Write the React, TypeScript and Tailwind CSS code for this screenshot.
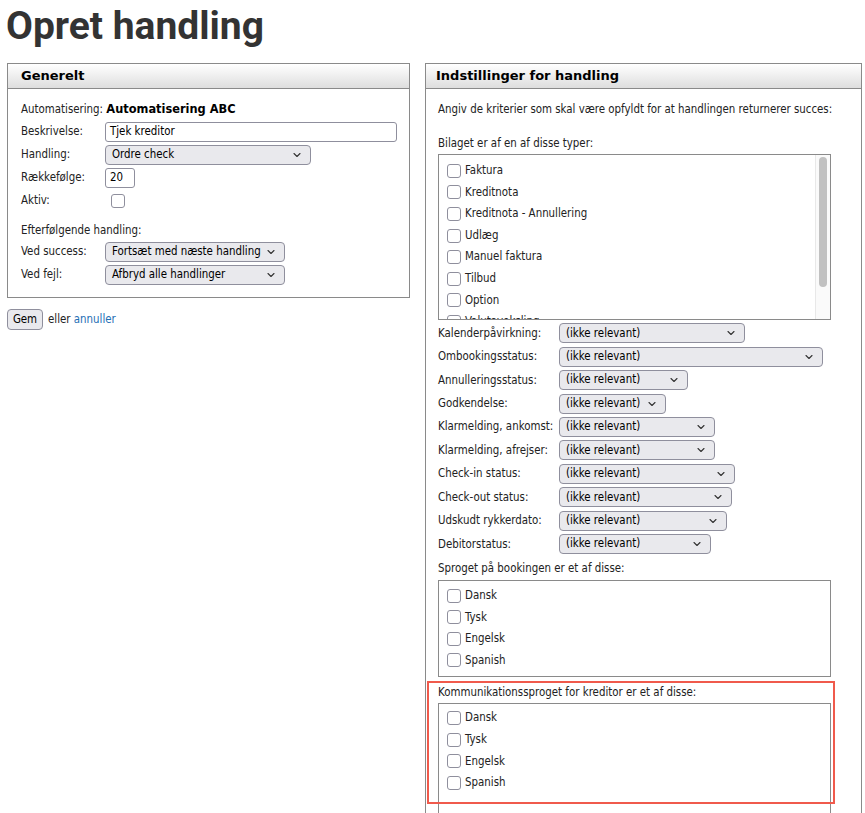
import React from "react";

function Chevron() {
  return (
    <svg width="8" height="5" viewBox="0 0 8 5" className="absolute right-[9px] top-1/2 -translate-y-1/2">
      <path d="M1 1 L4 4 L7 1" fill="none" stroke="#333" strokeWidth="1.1" strokeLinecap="round" strokeLinejoin="round" />
    </svg>
  );
}

function Sel({ w, text }: { w: string; text: string }) {
  return (
    <div className={`relative h-[20px] ${w} shrink-0 rounded-[4px] border border-[#8f8f9d] bg-[#e9e9ed] flex items-center pl-[6px] text-black whitespace-nowrap`}>
      <span className="leading-none">{text}</span>
      <Chevron />
    </div>
  );
}

function Box() {
  return <span className="block w-[14px] h-[14px] shrink-0 rounded-[3px] border-[1.5px] border-[#8f8f9d] bg-white" />;
}

function CheckItem({ label }: { label: string }) {
  return (
    <div className="flex items-center h-[21.6px] gap-[4px] whitespace-nowrap">
      <Box />
      <span className="leading-none">{label}</span>
    </div>
  );
}

const types = [
  "Faktura",
  "Kreditnota",
  "Kreditnota - Annullering",
  "Udlæg",
  "Manuel faktura",
  "Tilbud",
  "Option",
  "Valutaveksling",
];

const selects: [string, string][] = [
  ["Kalenderpåvirkning:", "w-[186px]"],
  ["Ombookingsstatus:", "w-[264px]"],
  ["Annulleringsstatus:", "w-[129px]"],
  ["Godkendelse:", "w-[107px]"],
  ["Klarmelding, ankomst:", "w-[156px]"],
  ["Klarmelding, afrejser:", "w-[156px]"],
  ["Check-in status:", "w-[176px]"],
  ["Check-out status:", "w-[173px]"],
  ["Udskudt rykkerdato:", "w-[168px]"],
  ["Debitorstatus:", "w-[152px]"],
];

const langs = ["Dansk", "Tysk", "Engelsk", "Spanish"];

function PanelHeader({ title, pad }: { title: string; pad: string }) {
  return (
    <div className={`h-[25px] bg-gradient-to-b from-white to-[#dedede] border-b border-[#8a8a8a] flex items-center ${pad} font-['DejaVu_Sans',sans-serif] font-bold text-[13px] text-black`}>
      {title}
    </div>
  );
}

export default function App() {
  return (
    <div className="relative w-[865px] h-[813px] overflow-hidden bg-white text-[11.4px] text-[#222] font-['DejaVu_Sans_Condensed','DejaVu_Sans',sans-serif]">
      <h1 className="font-['Roboto',sans-serif] font-bold text-[39px] leading-[48px] text-[#333] pl-[6px] pt-[2px] h-[63px]">
        Opret handling
      </h1>
      <div className="flex items-start pl-[7px]">
        {/* Left column */}
        <div className="w-[403px] shrink-0">
          <div className="border border-[#8a8a8a]">
            <PanelHeader title="Generelt" pad="pl-[13px]" />
            <div className="pl-[13px] pt-[11px] pb-[11px] whitespace-nowrap">
              <div className="h-[20px] flex items-center">
                <span>Automatisering:&nbsp;</span>
                <span className="font-['DejaVu_Sans',sans-serif] font-bold text-black">Automatisering ABC</span>
              </div>
              <div className="h-[23px] flex items-center">
                <span className="w-[84px] shrink-0">Beskrivelse:</span>
                <div className="h-[20px] w-[292px] rounded-[3px] border border-[#8f8f9d] bg-white flex items-center pl-[4px] text-black">
                  Tjek kreditor
                </div>
              </div>
              <div className="h-[23px] flex items-center">
                <span className="w-[84px] shrink-0">Handling:</span>
                <Sel w="w-[206px]" text="Ordre check" />
              </div>
              <div className="h-[23px] flex items-center">
                <span className="w-[84px] shrink-0">Rækkefølge:</span>
                <div className="h-[20px] w-[30px] rounded-[3px] border border-[#8f8f9d] bg-white flex items-center pl-[4px] text-black">
                  20
                </div>
              </div>
              <div className="h-[23px] flex items-center">
                <span className="w-[90px] shrink-0">Aktiv:</span>
                <Box />
              </div>
              <div className="h-[10px]" />
              <div className="h-[18px] flex items-center">Efterfølgende handling:</div>
              <div className="h-[23px] flex items-center">
                <span className="w-[84px] shrink-0">Ved success:</span>
                <Sel w="w-[180px]" text="Fortsæt med næste handling" />
              </div>
              <div className="h-[23px] flex items-center">
                <span className="w-[84px] shrink-0">Ved fejl:</span>
                <Sel w="w-[180px]" text="Afbryd alle handlinger" />
              </div>
            </div>
          </div>
          <div className="flex items-center mt-[11px] gap-[5px]">
            <div className="h-[21px] w-[36px] rounded-[4px] border border-[#8f8f9d] bg-[#e9e9ed] flex items-center justify-center text-black">
              Gem
            </div>
            <span>
              eller <span className="text-[#1f6fb5]">annuller</span>
            </span>
          </div>
        </div>

        {/* Right column */}
        <div className="w-[437px] shrink-0 ml-[15px] border border-[#8a8a8a] h-[760px]">
          <PanelHeader title="Indstillinger for handling" pad="pl-[10px]" />
          <div className="pl-[12px] pt-[11px] whitespace-nowrap">
            <div className="h-[20px] flex items-center">
              Angiv de kriterier som skal være opfyldt for at handlingen returnerer succes:
            </div>
            <div className="h-[18px] mt-[15px] flex items-center">Bilaget er af en af disse typer:</div>
            <div className="relative mt-[1px] w-[393px] h-[166px] border border-[#8a8a8a] overflow-hidden">
              <div className="pl-[8px] pt-[5px]">
                {types.map((t) => (
                  <CheckItem key={t} label={t} />
                ))}
              </div>
              <div className="absolute right-0 top-0 bottom-0 w-[15px] bg-[#fafafa] border-l border-[#e8e8e8]">
                <div className="absolute left-[3px] top-[2px] w-[8px] h-[130px] rounded-full bg-[#c1c1c1]" />
              </div>
            </div>
            <div className="mt-[1.5px]">
              {selects.map(([l, w]) => (
                <div key={l} className="h-[23.45px] flex items-center">
                  <span className="w-[121px] shrink-0">{l}</span>
                  <Sel w={w} text="(ikke relevant)" />
                </div>
              ))}
            </div>
            <div className="h-[18px] mt-[4px] flex items-center">Sproget på bookingen er et af disse:</div>
            <div className="mt-[2px] w-[393px] h-[97px] border border-[#8a8a8a] pl-[8px] pt-[4px]">
              {langs.map((t) => (
                <CheckItem key={t} label={t} />
              ))}
            </div>
            <div className="h-[18px] mt-[7px] flex items-center">Kommunikationssproget for kreditor er et af disse:</div>
            <div className="mt-[1px] w-[393px] h-[130px] border border-[#8a8a8a] pl-[8px] pt-[3.5px]">
              {langs.map((t) => (
                <CheckItem key={t} label={t} />
              ))}
            </div>
          </div>
        </div>
      </div>
      <div className="absolute left-[427px] top-[681px] w-[408px] h-[123px] border-2 border-[#f05a4c] pointer-events-none" />
    </div>
  );
}
